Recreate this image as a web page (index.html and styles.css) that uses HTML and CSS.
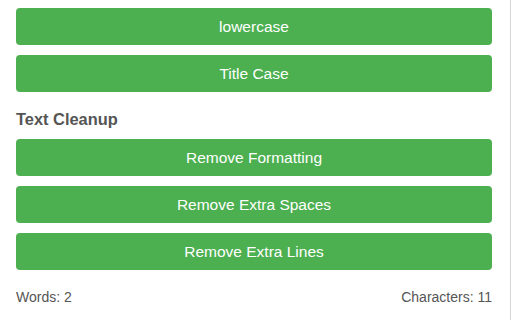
FILE: index.html
```html
<!DOCTYPE html>
<html lang="en">
<head>
<meta charset="utf-8">
<title>Text Tools</title>
<link rel="stylesheet" href="styles.css">
</head>
<body>
<div class="page">
  <div class="stack">
    <button class="btn">lowercase</button>
    <button class="btn">Title Case</button>
    <h2 class="section-title">Text Cleanup</h2>
    <button class="btn">Remove Formatting</button>
    <button class="btn">Remove Extra Spaces</button>
    <button class="btn">Remove Extra Lines</button>
  </div>
  <div class="stats">
    <span>Words: 2</span>
    <span>Characters: 11</span>
  </div>
</div>
</body>
</html>
```

FILE: styles.css
```css
html, body {
  margin: 0;
  padding: 0;
  background: #ffffff;
}
body {
  font-family: "Liberation Sans", Arial, Helvetica, sans-serif;
}
.page {
  box-sizing: border-box;
  width: 511px;
  height: 320px;
  padding: 8px 18px 0 16px;
  border-right: 1px solid #d6d6d6;
  overflow: hidden;
}
.stack {
  display: flex;
  flex-direction: column;
  gap: 10px;
}
.btn {
  display: block;
  width: 100%;
  height: 37px;
  margin: 0;
  padding: 0;
  border: none;
  border-radius: 4px;
  background: #4caf50;
  color: #ffffff;
  font-family: "Liberation Sans", Arial, Helvetica, sans-serif;
  font-size: 15.5px;
  line-height: 37px;
  text-align: center;
}
.section-title {
  margin: 0;
  padding-top: 8px;
  font-size: 16.4px;
  line-height: 19px;
  font-weight: bold;
  color: #555555;
}
.stats {
  display: flex;
  justify-content: space-between;
  margin-top: 19px;
  font-size: 14px;
  line-height: 16px;
  color: #555555;
}
```
